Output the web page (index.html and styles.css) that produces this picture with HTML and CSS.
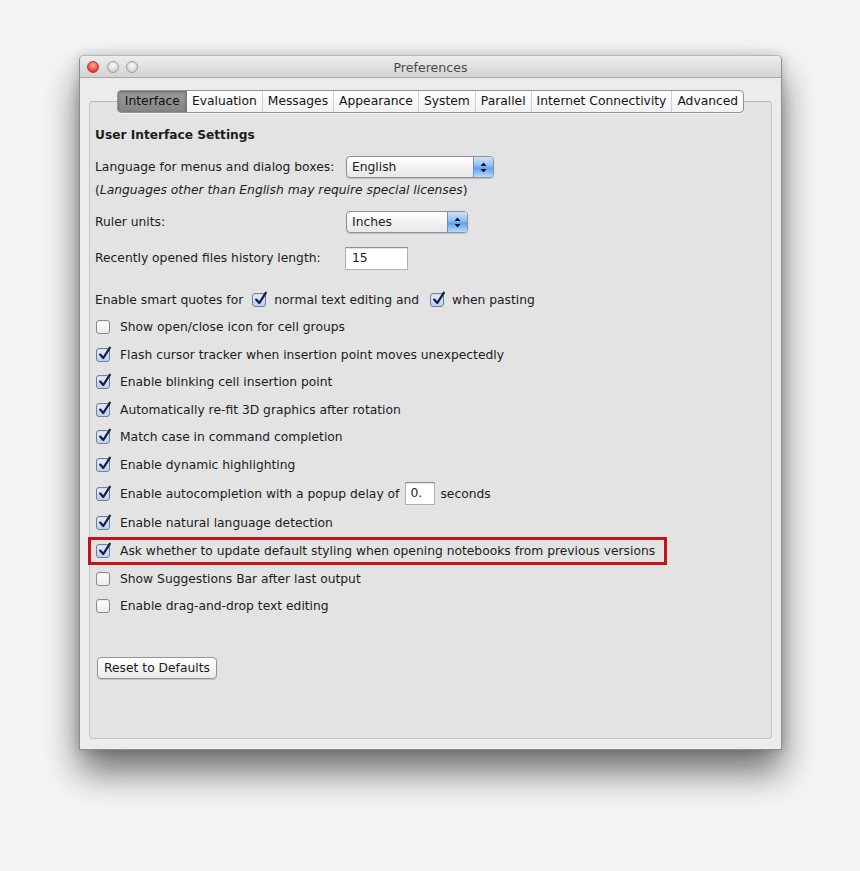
FILE: index.html
```html
<!DOCTYPE html>
<html>
<head>
<meta charset="UTF-8">
<title>Preferences</title>
<link rel="stylesheet" href="styles.css">
</head>
<body>
<div class="window">
	<div class="titlebar">
		<div class="lights">
			<span class="light close"></span>
			<span class="light"></span>
			<span class="light"></span>
		</div>
		<div class="title">Preferences</div>
		<div></div>
	</div>

	<div class="body">
		<!-- tab bar -->
		<div class="tabs">
			<div class="seg">
				<span class="tab on">Interface</span>
				<span class="tab">Evaluation</span>
				<span class="tab">Messages</span>
				<span class="tab">Appearance</span>
				<span class="tab">System</span>
				<span class="tab">Parallel</span>
				<span class="tab">Internet Connectivity</span>
				<span class="tab">Advanced</span>
			</div>
		</div>

		<div class="group">
			<div class="heading">User Interface Settings</div>

			<div class="field first">
				<span class="label">Language for menus and dialog boxes:</span>
				<span class="select wide"><span class="val">English</span><span class="arrows"><svg width="7" height="11" viewBox="0 0 7 11"><path d="M3.5 0.5 L6.5 4 L0.5 4 Z M0.5 7 L6.5 7 L3.5 10.5 Z" fill="#111"/></svg></span></span>
			</div>
			<div class="note">(<i>Languages other than English may require special licenses</i>)</div>

			<div class="field">
				<span class="label">Ruler units:</span>
				<span class="select narrow"><span class="val">Inches</span><span class="arrows"><svg width="7" height="11" viewBox="0 0 7 11"><path d="M3.5 0.5 L6.5 4 L0.5 4 Z M0.5 7 L6.5 7 L3.5 10.5 Z" fill="#111"/></svg></span></span>
			</div>

			<div class="field">
				<span class="label">Recently opened files history length:</span>
				<span class="textbox hist">15</span>
			</div>

			<!-- checkbox rows -->
			<div class="row quotes">
				<span>Enable smart quotes for</span>
				<span class="box on q1"></span>
				<span>normal text editing and</span>
				<span class="box on q2"></span>
				<span>when pasting</span>
			</div>
			<div class="row"><span class="box"></span>Show open/close icon for cell groups</div>
			<div class="row"><span class="box on"></span>Flash cursor tracker when insertion point moves unexpectedly</div>
			<div class="row"><span class="box on"></span>Enable blinking cell insertion point</div>
			<div class="row"><span class="box on"></span>Automatically re-fit 3D graphics after rotation</div>
			<div class="row"><span class="box on"></span>Match case in command completion</div>
			<div class="row"><span class="box on"></span>Enable dynamic highlighting</div>
			<div class="row auto"><span class="box on"></span>Enable autocompletion with a popup delay of <span class="textbox delay">0.</span> seconds</div>
			<div class="row"><span class="box on"></span>Enable natural language detection</div>
			<div class="row alert"><span class="box on"></span>Ask whether to update default styling when opening notebooks from previous versions</div>
			<div class="row"><span class="box"></span>Show Suggestions Bar after last output</div>
			<div class="row"><span class="box"></span>Enable drag-and-drop text editing</div>

			<button type="button" class="reset">Reset to Defaults</button>
		</div>
	</div>
</div>
</body>
</html>
```

FILE: styles.css
```css
html{
	background: #f5f5f5;
}
body{
	margin: 0;
	min-height: 871px;
	padding-top: 55px;
	box-sizing: border-box;
	font-family: "DejaVu Sans", "Liberation Sans", sans-serif;
	font-size: 12.3px;
	color: #1c1c1c;
}

.window{
	box-sizing: border-box;
	width: 703px;
	margin-left: 79px;
	background: #ececec;
	border: 1px solid #8e8e8e;
	border-top-color: #b4b4b4;
	border-radius: 5px 5px 0 0;
	box-shadow: 0 22px 36px rgba(0,0,0,0.55), 0 0 12px rgba(0,0,0,0.18);
}

.titlebar{
	height: 21px;
	display: grid;
	grid-template-columns: 1fr auto 1fr;
	align-items: center;
	border-bottom: 1px solid #a9a9a9;
	border-radius: 4px 4px 0 0;
	background: linear-gradient(#ededed, #d3d3d3);
}
.lights{
	display: flex;
	gap: 7.5px;
	padding-left: 7px;
}
.light{
	width: 12px;
	height: 12px;
	border-radius: 50%;
	box-sizing: border-box;
	border: 1px solid #9d9d9d;
	background: radial-gradient(circle at 50% 35%, #fbfbfb, #d3d3d3 70%, #bdbdbd);
}
.light.close{
	border-color: #b23a33;
	background: radial-gradient(circle at 50% 35%, #ffb1a9, #f2473d 60%, #c9241c);
}
.title{
	color: #4b4b4b;
	font-size: 12.6px;
	padding-top: 1px;
}

.body{
	padding: 12px 9px 10px 9px;
}

.tabs{
	display: flex;
	justify-content: center;
	margin-bottom: -12px;
	position: relative;
	z-index: 1;
}
.seg{
	display: flex;
	height: 23px;
	box-sizing: border-box;
	border: 1px solid #939393;
	border-radius: 4px;
	background: linear-gradient(#ffffff, #f1f1f1);
	overflow: hidden;
	box-shadow: 0 1px 0 rgba(255,255,255,0.6);
}
.tab{
	line-height: 21px;
	padding: 0 5px;
	border-left: 1px solid #d0d0d0;
	color: #151515;
}
.tab:first-child{
	border-left: none;
	padding: 0 6px 0 7px;
}
.tab.on{
	background: linear-gradient(#9a9a9a, #858585);
	box-shadow: inset 0 1px 3px rgba(0,0,0,0.35);
	color: #111;
	border-right: 1px solid #7a7a7a;
}
.tab.on + .tab{
	border-left: none;
}

.group{
	border: 1px solid #c6c6c6;
	border-top-color: #b9b9b9;
	border-radius: 4px;
	background: #e3e3e3;
	padding: 23px 6px 59px 5px;
}

.heading{
	font-weight: bold;
	height: 20px;
	line-height: 20px;
	font-size: 12.2px;
}

.field{
	display: flex;
	align-items: center;
	height: 24px;
	margin-top: 12px;
}
.field.first{
	margin-top: 10px;
}
.label{
	width: 251px;
	flex: none;
}
.note{
	height: 16px;
	line-height: 16px;
	margin-top: 3px;
}

.select{
	display: flex;
	height: 22px;
	box-sizing: border-box;
	border: 1px solid #8f8f8f;
	border-radius: 4px;
	background: linear-gradient(#ffffff, #f0f0f0 60%, #e8e8e8);
	overflow: hidden;
	box-shadow: 0 1px 1px rgba(0,0,0,0.15);
}
.select.wide{
	width: 148px;
}
.select.narrow{
	width: 122px;
}
.val{
	flex: 1;
	padding-left: 5px;
	line-height: 20px;
}
.arrows{
	width: 19px;
	display: flex;
	align-items: center;
	justify-content: center;
	border-left: 1px solid #6a8fc8;
	background: linear-gradient(#cfe3fb, #8dbdf5 45%, #5ba0ef 55%, #b6dcfc);
}

.textbox{
	display: inline-block;
	box-sizing: border-box;
	height: 23px;
	line-height: 21px;
	padding-left: 6px;
	background: #fff;
	border: 1px solid #b0b0b0;
	border-top-color: #8e8e8e;
	box-shadow: inset 0 1px 1px rgba(0,0,0,0.12);
}
.textbox.hist{
	width: 63px;
	margin-left: -1px;
}
.textbox.delay{
	width: 30px;
	padding-left: 4px;
	margin: 0 5px 0 6px;
}

.row{
	display: flex;
	align-items: center;
	height: 27.5px;
	white-space: nowrap;
}
.row.quotes{
	margin-top: 16px;
}
.row.auto{
	height: 30.5px;
}
.row.alert{
	width: fit-content;
	height: 28.5px;
	box-sizing: border-box;
	margin-left: -7px;
	padding: 0 9px 0 4px;
	border: 3px solid #c0151c;
}

.box{
	flex: none;
	width: 14px;
	height: 14px;
	box-sizing: border-box;
	margin: 0 10px 0 1px;
	border: 1px solid #8a8a8a;
	border-radius: 3px;
	background: linear-gradient(#ffffff, #ececec);
	box-shadow: inset 0 1px 1px rgba(0,0,0,0.08);
	position: relative;
}
.box.on{
	border-color: #6f7f9c;
	background: linear-gradient(#e6eefb, #bcd0ee);
}
.box.on::after{
	content: "";
	position: absolute;
	left: 1px;
	top: -3px;
	width: 14px;
	height: 15px;
	background: url("data:image/svg+xml;utf8,<svg xmlns='http://www.w3.org/2000/svg' width='14' height='15' viewBox='0 0 14 15'><path d='M2.2 8.6 L5.3 12 L11.8 1.8' fill='none' stroke='%23142040' stroke-width='2.3' stroke-linecap='round' stroke-linejoin='round'/></svg>") no-repeat;
}
.box.q1{
	margin: 0 8px 0 9px;
}
.box.q2{
	margin: 0 8px 0 11px;
}

.reset{
	display: block;
	margin: 37px 0 0 2px;
	width: 120px;
	height: 22px;
	padding: 0;
	font-family: inherit;
	font-size: 12.3px;
	color: #1c1c1c;
	border: 1px solid #959595;
	border-radius: 4px;
	background: linear-gradient(#ffffff, #f3f3f3 60%, #e9e9e9);
	box-shadow: 0 1px 1px rgba(0,0,0,0.15);
}
```
